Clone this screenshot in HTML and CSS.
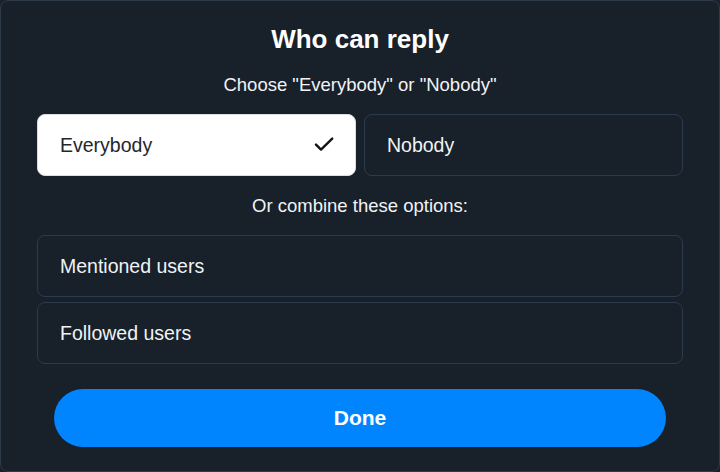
FILE: index.html
```html
<!DOCTYPE html>
<html lang="en">
<head>
<meta charset="utf-8">
<title>Who can reply</title>
<link rel="stylesheet" href="styles.css">
</head>
<body>
<div class="dialog">
  <h1 class="title">Who can reply</h1>
  <p class="subtitle">Choose "Everybody" or "Nobody"</p>
  <div class="choice-row">
    <div class="option option-selected">
      <span class="label">Everybody</span>
      <svg class="check" width="20" height="16" viewBox="0 0 20 16" aria-hidden="true">
        <path d="M2 7.6 L7 12.6 L18.2 1.6" fill="none" stroke="#111418" stroke-width="2.4" stroke-linecap="round" stroke-linejoin="round"/>
      </svg>
    </div>
    <div class="option">
      <span class="label">Nobody</span>
    </div>
  </div>
  <p class="subtitle combine">Or combine these options:</p>
  <div class="option-list">
    <div class="option"><span class="label">Mentioned users</span></div>
    <div class="option"><span class="label">Followed users</span></div>
  </div>
  <button class="done">Done</button>
</div>
</body>
</html>
```
FILE: styles.css
```css
html, body {
  margin: 0;
  padding: 0;
  background: #18202a;
}
body {
  font-family: "Liberation Sans", Arial, sans-serif;
  color: #f1f3f5;
}
.dialog {
  box-sizing: border-box;
  width: 720px;
  height: 472px;
  border: 1px solid #2e3b4a;
  border-radius: 8px;
  background: #18202a;
  padding: 23px 36px 24px;
  display: flex;
  flex-direction: column;
}
.title {
  margin: 0;
  font-size: 26px;
  line-height: 30px;
  font-weight: 700;
  text-align: center;
  color: #ffffff;
}
.subtitle {
  margin: 19px 0 0;
  font-size: 18.5px;
  line-height: 24px;
  text-align: center;
  color: #f1f3f5;
}
.subtitle.combine {
  margin-top: 18px;
}
.choice-row {
  margin-top: 17px;
  display: flex;
  gap: 8px;
}
.choice-row .option {
  flex: 1;
}
.option {
  box-sizing: border-box;
  height: 62px;
  border: 1px solid #2b3b4e;
  border-radius: 8px;
  padding: 0 22px;
  display: flex;
  align-items: center;
  justify-content: space-between;
}
.option-selected {
  background: #ffffff;
  border-color: #d9dee4;
}
.label {
  font-size: 19.5px;
  line-height: 22px;
  color: #f1f3f5;
}
.option-selected .label {
  color: #23272d;
}
.check {
  display: block;
  margin-right: -1px;
}
.option-list {
  margin-top: 17px;
  display: flex;
  flex-direction: column;
  gap: 5px;
}
.done {
  margin: 25px 17px 0;
  height: 58px;
  border: none;
  border-radius: 29px;
  background: #0085ff;
  color: #ffffff;
  font-family: "Liberation Sans", Arial, sans-serif;
  font-size: 21px;
  font-weight: 700;
  cursor: pointer;
}
```
